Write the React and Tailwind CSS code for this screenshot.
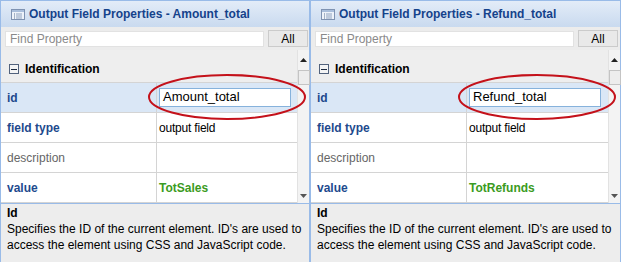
import React from 'react';

const panels = [
  { name: 'Amount_total', value: 'TotSales' },
  { name: 'Refund_total', value: 'TotRefunds' },
];

function PanelIcon() {
  return (
    <svg width="14" height="11" viewBox="0 0 14 11" className="shrink-0">
      <rect x="0.5" y="0.5" width="13" height="10" fill="#eef3fa" stroke="#7f93b2" />
      <rect x="1" y="1" width="12" height="2" fill="#a9bedb" />
      <line x1="3" y1="5" x2="4" y2="5" stroke="#5b7190" />
      <line x1="5" y1="5" x2="11" y2="5" stroke="#8fa3c0" />
      <line x1="3" y1="7" x2="4" y2="7" stroke="#5b7190" />
      <line x1="5" y1="7" x2="11" y2="7" stroke="#8fa3c0" />
      <line x1="3" y1="9" x2="4" y2="9" stroke="#5b7190" />
      <line x1="5" y1="9" x2="11" y2="9" stroke="#8fa3c0" />
    </svg>
  );
}

function Row({ label, labelClass, children, selected }) {
  return (
    <div className={`flex h-[30px] border-b border-[#d4d4d4] ${selected ? 'bg-[#dae7f6]' : 'bg-white'}`}>
      <div className={`w-[156px] flex items-center pl-[6px] border-r border-[#d4d4d4] ${labelClass}`}>
        {label}
      </div>
      <div className="flex-1 flex items-center pl-[2px]">{children}</div>
    </div>
  );
}

function Scrollbar() {
  return (
    <div className="w-[12px] bg-[#f3f3f3] border-l border-[#e2e2e2] flex flex-col items-center">
      <div className="h-[20px] flex items-center justify-center">
        <svg width="7" height="4" viewBox="0 0 7 4"><path d="M0 4 L3.5 0 L7 4 Z" fill="#222" /></svg>
      </div>
      <div className="w-[12px] h-[15px] bg-[#ededed] border border-[#c4c4c4]" />
      <div className="flex-1" />
      <div className="h-[14px] flex items-center justify-center">
        <svg width="7" height="4" viewBox="0 0 7 4"><path d="M0 0 L3.5 4 L7 0 Z" fill="#555" /></svg>
      </div>
    </div>
  );
}

function Panel({ name, value, last }) {
  return (
    <div className={`relative ${last ? 'w-[311px] border-r' : 'w-[310px] border-r'} border-l border-[#99bbe8] h-[262px] flex flex-col`}>
      <div className="h-[27px] border-t border-[#99bbe8] bg-gradient-to-b from-[#e3ecf8] to-[#c9daef] flex items-center gap-[4px] pl-[10px]">
        <PanelIcon />
        <span className="font-bold text-[12px] text-[#15428b]">Output Field Properties - {name}</span>
      </div>
      <div className="h-[23px] bg-[#ececec] flex items-center gap-[4px] pl-[4px] pr-[1px]">
        <div className="w-[259px] h-[16px] bg-white border border-[#e2e2e2] flex items-center pl-[4px] text-[12px] text-[#8a8a8a]">
          Find Property
        </div>
        <div className="w-[40px] h-[17px] bg-[#e9e9e9] border border-[#cbcbcb] flex items-center justify-center text-[12px] text-black">
          All
        </div>
      </div>
      <div className="flex h-[153px]">
        <div className="flex-1 flex flex-col">
          <div className="h-[33px] bg-[#eeeeee] flex items-center gap-[6px] pl-[8px] pt-[6px] border-b border-[#d4d4d4]">
            <div className="w-[10px] h-[10px] border border-[#52627c] bg-[#f4f4f4] flex items-center justify-center">
              <div className="w-[6px] h-[1px] bg-[#1e2b40]" />
            </div>
            <span className="font-bold text-[12px] text-black">Identification</span>
          </div>
          <Row label="id" labelClass="font-bold text-[12px] text-[#1e4a8d]" selected>
            <div className="w-[132px] h-[19px] mt-[-1px] bg-white border border-[#86b2dc] flex items-center pl-[3px] text-[13px] text-black">
              {name}
            </div>
          </Row>
          <Row label="field type" labelClass="font-bold text-[12px] text-[#1e4a8d]">
            <span className="text-[12px] text-black tracking-[-0.2px]">output field</span>
          </Row>
          <Row label="description" labelClass="text-[12px] text-[#666666]">
            <span />
          </Row>
          <Row label="value" labelClass="font-bold text-[12px] text-[#1e4a8d]">
            <span className="font-bold text-[12px] text-[#3b9b22]">{value}</span>
          </Row>
        </div>
        <Scrollbar />
      </div>
      <div className="flex-1 bg-[#ededed] border-t border-[#99bbe8] pl-[6px] pt-[1px] text-[12px] leading-[16px] text-black">
        <div className="font-bold">Id</div>
        <div>Specifies the ID of the current element. ID's are used to</div>
        <div>access the element using CSS and JavaScript code.</div>
      </div>
      <svg className="absolute left-[146px] top-[73px] pointer-events-none" width="160" height="48" viewBox="0 0 160 48">
        <ellipse cx="80" cy="24" rx="78" ry="22" fill="none" stroke="#c4111a" strokeWidth="2" />
      </svg>
    </div>
  );
}

export default function App() {
  return (
    <div className="w-[621px] h-[262px] flex bg-white overflow-hidden" style={{ fontFamily: '"Liberation Sans", Arial, sans-serif' }}>
      {panels.map((p, i) => (
        <Panel key={p.name} name={p.name} value={p.value} last={i === panels.length - 1} />
      ))}
    </div>
  );
}
